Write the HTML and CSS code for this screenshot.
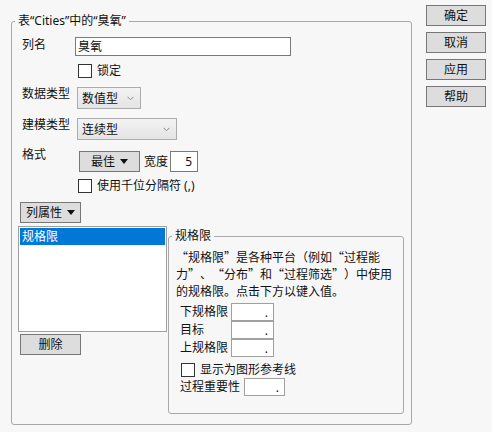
FILE: index.html
```html
<!DOCTYPE html>
<html lang="zh-CN">
<head>
<meta charset="utf-8">
<link rel="stylesheet" href="styles.css">
</head>
<body>
<div class="dialog">
  <fieldset class="group main">
    <legend class="legend">表“Cities”中的“臭氧”</legend>

    <div class="row r-name">
      <span class="lbl">列名</span>
      <div class="textbox">臭氧</div>
    </div>

    <div class="row r-lock">
      <span class="cb"></span><span class="cb-text">锁定</span>
    </div>

    <div class="row r-dtype">
      <span class="lbl">数据类型</span>
      <div class="combo combo-dtype"><span>数值型</span><svg class="chev" width="7" height="5" viewBox="0 0 7 5"><path d="M0.5 0.8 L3.5 3.8 L6.5 0.8" fill="none" stroke="#8a8a8a" stroke-width="1"/></svg></div>
    </div>

    <div class="row r-mtype">
      <span class="lbl">建模类型</span>
      <div class="combo combo-mtype"><span>连续型</span><svg class="chev" width="7" height="5" viewBox="0 0 7 5"><path d="M0.5 0.8 L3.5 3.8 L6.5 0.8" fill="none" stroke="#8a8a8a" stroke-width="1"/></svg></div>
    </div>

    <div class="row r-format">
      <span class="lbl lbl-up">格式</span>
      <div class="btn btn-menu btn-best">最佳<span class="tri"></span></div>
      <span class="width-lbl">宽度</span>
      <div class="numbox">5</div>
    </div>

    <div class="row r-thousand">
      <span class="cb"></span><span class="cb-text">使用千位分隔符 (,)</span>
    </div>

    <div class="row r-props">
      <div class="btn btn-menu btn-props">列属性<span class="tri"></span></div>
    </div>

    <div class="row r-bottom">
      <div class="left-col">
        <div class="listbox">
          <div class="list-item selected">规格限</div>
        </div>
        <div class="btn btn-del">删除</div>
      </div>

      <fieldset class="group spec">
        <legend class="legend">规格限</legend>
        <p class="desc">“规格限”是各种平台（例如“过程能<br>力”、“分布”和“过程筛选”）中使用<br>的规格限。点击下方以键入值。</p>
        <div class="limits">
          <div class="lim-row"><span class="lim-lbl">下规格限</span><div class="numfield">.</div></div>
          <div class="lim-row"><span class="lim-lbl">目标</span><div class="numfield">.</div></div>
          <div class="lim-row"><span class="lim-lbl">上规格限</span><div class="numfield">.</div></div>
        </div>
        <div class="spec-cb">
          <span class="cb"></span><span class="cb-text">显示为图形参考线</span>
        </div>
        <div class="imp-row">
          <span class="imp-lbl">过程重要性</span><div class="numfield imp">.</div>
        </div>
      </fieldset>
    </div>
  </fieldset>

  <div class="actions">
    <div class="btn act">确定</div>
    <div class="btn act">取消</div>
    <div class="btn act">应用</div>
    <div class="btn act">帮助</div>
  </div>
</div>
</body>
</html>
```

FILE: styles.css
```css
* { box-sizing: border-box; }

html, body {
  margin: 0;
  padding: 0;
  background: #f7f7f7;
}

body {
  width: 492px;
  height: 432px;
  overflow: hidden;
  font-family: "Noto Sans", "Noto Sans CJK SC", sans-serif;
  font-size: 12px;
  line-height: 16px;
  color: #111;
}

.dialog {
  display: flex;
  align-items: flex-start;
}

.group {
  margin: 0;
  padding: 0;
  border: 1px solid #a8a8a8;
  border-radius: 3px;
  min-width: 0;
}

.legend {
  margin-left: 3px;
  padding: 0 3px;
  line-height: 16px;
}

.main {
  margin: 13px 0 0 11px;
  width: 401px;
  height: 412px;
}

.row {
  display: flex;
  align-items: flex-start;
}

.lbl {
  width: 53px;
  margin-left: 10px;
  flex: none;
}

.lbl-up { margin-top: -4px; }

.r-name { margin-top: 8px; }

.textbox {
  width: 216px;
  height: 19px;
  border: 1px solid #7a7a7a;
  background: #fff;
  padding: 0 2px;
  line-height: 17px;
}

.cb {
  width: 14px;
  height: 14px;
  border: 1px solid #333;
  background: #fff;
  flex: none;
}

.cb-text { margin-left: 5px; }

.r-lock {
  margin-top: 8px;
  margin-left: 66px;
  align-items: center;
  height: 14px;
}

.r-dtype { margin-top: 9px; }
.r-mtype { margin-top: 9px; }

.r-dtype .lbl, .r-mtype .lbl { margin-top: -1px; }

.combo {
  height: 22px;
  margin-left: 2px;
  border: 1px solid #acacac;
  background: linear-gradient(#f3f3f3, #e4e4e4);
  display: flex;
  align-items: center;
  justify-content: space-between;
  padding: 1px 6px 0 4px;
}

.combo-dtype { width: 64px; }
.combo-mtype { width: 100px; }

.chev { margin-top: -1px; }

.btn {
  background: #dddddd;
  border: 1px solid #777;
  display: flex;
  align-items: center;
  justify-content: center;
  height: 21px;
  width: 61px;
}

.btn-menu .tri {
  width: 0;
  height: 0;
  border-left: 4px solid transparent;
  border-right: 4px solid transparent;
  border-top: 5px solid #111;
  margin-left: 5px;
}

.r-format { margin-top: 11px; }

.btn-best { margin-left: 4px; }

.width-lbl { margin: 3px 0 0 4px; }

.numbox {
  width: 28px;
  height: 21px;
  margin-left: 2px;
  border: 1px solid #7a7a7a;
  background: #fff;
  text-align: right;
  padding: 2px 5px 0 0;
}

.r-thousand {
  margin-top: 7px;
  margin-left: 66px;
  align-items: center;
  height: 14px;
}

.r-props { margin-top: 9px; margin-left: 8px; }
.btn-props { width: 61px; height: 21px; }

.r-bottom { margin-top: 3px; margin-left: 6px; }

.left-col { display: flex; flex-direction: column; }

.listbox {
  width: 149px;
  height: 106px;
  border: 1px solid #a0a0a0;
  background: #fff;
  padding: 1px;
}

.list-item { padding-left: 2px; height: 17px; line-height: 17px; }
.list-item.selected { background: #0078d7; color: #fff; }

.btn-del { margin: 2px 0 0 2px; }

.spec {
  margin-left: 1px;
  margin-top: 2px;
  width: 236px;
  height: 186px;
}

.desc {
  margin: 4px 0 0 0;
  padding-left: 7px;
  font-family: "Noto Sans CJK SC", sans-serif;
  line-height: 17px;
  white-space: nowrap;
  text-spacing-trim: space-all;
}

.limits { margin-top: 4px; padding-left: 11px; }

.lim-row {
  display: flex;
  align-items: center;
  height: 18px;
}

.lim-lbl { width: 51px; }

.numfield {
  width: 43px;
  height: 18px;
  border: 1px solid #a0a0a0;
  background: #fff;
  text-align: right;
  padding-right: 5px;
  line-height: 18px;
}

.spec-cb {
  display: flex;
  align-items: center;
  margin: 6px 0 0 12px;
  height: 14px;
}

.imp-row {
  display: flex;
  align-items: center;
  margin: 1px 0 0 11px;
}

.imp-lbl { width: 64px; }
.numfield.imp { width: 41px; }

.actions {
  margin: 5px 0 0 14px;
  display: flex;
  flex-direction: column;
  gap: 6px;
}

.act { width: 60px; }
```
